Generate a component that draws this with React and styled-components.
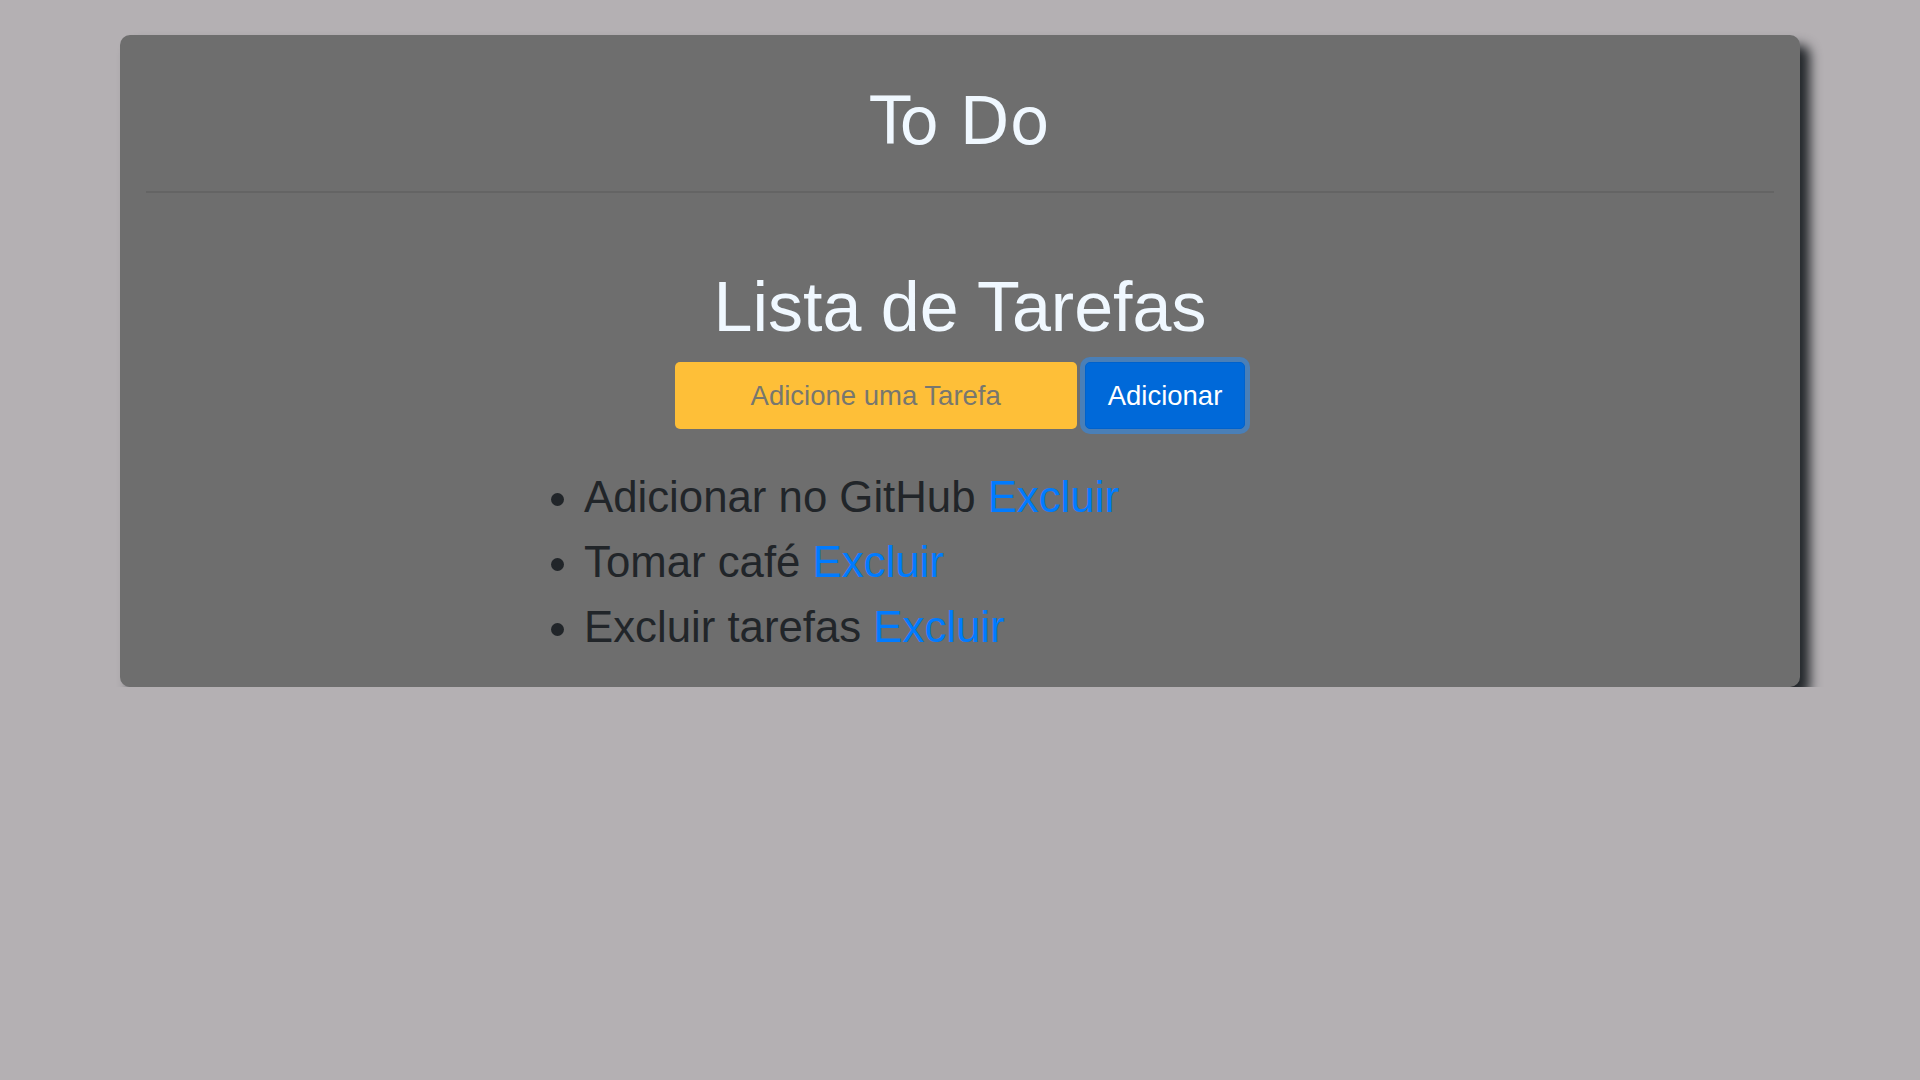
import React, { useState } from 'react';
import styled, { createGlobalStyle } from 'styled-components';

const GlobalStyle = createGlobalStyle`
  body {
    margin: 0;
    background: #b4b0b3;
    font-family: "Liberation Sans", Arial, sans-serif;
    color: #212529;
  }
`;

const Card = styled.div`
  width: 1680px;
  margin: 35px auto 0;
  padding: 47px 26px 28px;
  box-sizing: border-box;
  background: #6e6e6e;
  border-radius: 10px;
  box-shadow: 10px 10px 12px #23272b;
`;

const Title = styled.h1`
  margin: 0;
  font-family: "DejaVu Sans", sans-serif;
  font-size: 65px;
  font-weight: 400;
  line-height: 79px;
  text-align: center;
  color: aliceblue;
`;

const Divider = styled.hr`
  margin: 30px 0 0;
  border: 0;
  border-top: 2px solid #646464;
`;

const Subtitle = styled.h2`
  margin: 72px 0 0;
  font-size: 70px;
  font-weight: 400;
  line-height: 84px;
  text-align: center;
  color: aliceblue;
`;

const Form = styled.form`
  display: flex;
  justify-content: center;
  gap: 8px;
  margin-top: 13px;
`;

const TaskInput = styled.input`
  width: 402px;
  height: 67px;
  box-sizing: border-box;
  border: 0;
  border-radius: 5px;
  background: #febf38;
  font-family: inherit;
  font-size: 27.5px;
  text-align: center;
  color: #495057;
  outline: none;

  &::placeholder {
    color: #77776f;
  }
`;

const AddButton = styled.button`
  height: 67px;
  padding: 0 22px;
  box-sizing: border-box;
  border: 1px solid #0062cc;
  border-radius: 5px;
  background: #0069d9;
  color: #fff;
  font-family: inherit;
  font-size: 27.5px;
  box-shadow: 0 0 0 5px rgba(38, 143, 255, 0.5);
`;

const TaskList = styled.ul`
  margin: 35px 0 0;
  padding-left: 438px;
  font-size: 43.75px;
  line-height: 65px;
  color: #212529;
`;

const Remove = styled.a`
  color: #007bff;
  text-decoration: none;
  cursor: pointer;
`;

const initialTasks = ['Adicionar no GitHub', 'Tomar café', 'Excluir tarefas'];

export default function App() {
  const [tasks, setTasks] = useState(initialTasks);
  const [text, setText] = useState('');

  const add = (e) => {
    e.preventDefault();
    if (!text.trim()) return;
    setTasks([...tasks, text.trim()]);
    setText('');
  };

  return (
    <>
      <GlobalStyle />
      <Card>
        <Title>To Do</Title>
        <Divider />
        <Subtitle>Lista de Tarefas</Subtitle>
        <Form onSubmit={add}>
          <TaskInput
            placeholder="Adicione uma Tarefa"
            value={text}
            onChange={(e) => setText(e.target.value)}
          />
          <AddButton type="submit">Adicionar</AddButton>
        </Form>
        <TaskList>
          {tasks.map((t, i) => (
            <li key={i}>
              {t}{' '}
              <Remove onClick={() => setTasks(tasks.filter((_, j) => j !== i))}>Excluir</Remove>
            </li>
          ))}
        </TaskList>
      </Card>
    </>
  );
}
